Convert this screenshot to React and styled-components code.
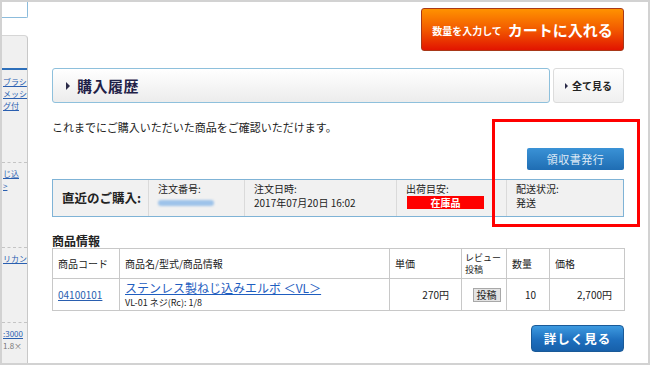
import React from 'react';
import styled, { createGlobalStyle } from 'styled-components';

const GlobalStyle = createGlobalStyle`
    html, body { margin: 0; padding: 0; background: #fff; }
    body { font-family: "Noto Sans CJK JP", "Liberation Sans", sans-serif; color: #333; }
`

const Frame = styled.div`
    width: 650px;
    height: 365px;
    box-sizing: border-box;
    border: 2px solid #d2d2d2;
    display: flex;
    overflow: hidden;
    position: relative;
    background: #fff;
`

const Sidebar = styled.div`
    width: 26px;
    flex-shrink: 0;
    display: flex;
    flex-direction: column;
`

const SideTop = styled.div`
    height: 22px;
    background: #fff;
    border-right: 1px solid #8cbcdc;
    border-bottom: 1px solid #8cbcdc;
    border-bottom-right-radius: 2px;
`

const SidePanel = styled.div`
    margin-top: 17px;
    flex: 1;
    background: #f0f0f0;
    border-top: 1px solid #d6d6d6;
    border-right: 1px solid #c8c8c8;
    border-top-right-radius: 4px;
    padding-top: 32px;
`

const SideBlue = styled.div`
    height: 2px;
    background: #2d6fba;
`

const SideItem = styled.div`
    height: ${p => p.h}px;
    box-sizing: border-box;
    padding: ${p => p.pt || 4}px 0 0 1px;
    border-bottom: ${p => p.last ? 'none' : '1px dashed #c4c4c4'};
    overflow: hidden;
`

const SideLink = styled.div`
    font-size: 8px;
    line-height: 12px;
    color: ${p => p.gray ? '#777' : '#2a5fb0'};
    text-decoration: ${p => p.gray ? 'none' : 'underline'};
    white-space: nowrap;
`

const Main = styled.div`
    flex: 1;
    min-width: 0;
    padding: 6px 24px 0 24px;
    display: flex;
    flex-direction: column;
`

const CartRow = styled.div`
    display: flex;
    justify-content: flex-end;
`

const CartButton = styled.div`
    width: 203px;
    height: 43px;
    box-sizing: border-box;
    border: 1px solid #a83818;
    border-radius: 3px;
    background: linear-gradient(#ff9200, #f25a00 50%, #e21400);
    display: flex;
    align-items: center;
    justify-content: center;
    gap: 6px;
    color: #fff;
    font-weight: bold;
`

const CartSmall = styled.span`
    font-size: 10px;
    margin-top: 2px;
`

const CartBig = styled.span`
    font-size: 15px;
`

const HeadRow = styled.div`
    display: flex;
    gap: 3px;
    margin-top: 17px;
    height: 35px;
`

const HeadBar = styled.div`
    flex: 1;
    box-sizing: border-box;
    border: 1px solid #8ec0dc;
    border-radius: 3px;
    background: linear-gradient(#fff, #ececec);
    display: flex;
    align-items: center;
    padding-left: 13px;
    gap: 7px;
`

const Arrow = styled.span`
    width: 0;
    height: 0;
    border-top: ${p => p.s}px solid transparent;
    border-bottom: ${p => p.s}px solid transparent;
    border-left: ${p => p.s * 1.2}px solid #2b2b48;
`

const HeadTitle = styled.span`
    font-size: 15px;
    font-weight: bold;
    color: #1f2147;
    letter-spacing: 0.5px;
`

const AllButton = styled.div`
    width: 71px;
    flex-shrink: 0;
    box-sizing: border-box;
    border: 1px solid #dcdcdc;
    border-radius: 3px;
    background: linear-gradient(#fff, #f0f0f0);
    display: flex;
    align-items: center;
    justify-content: center;
    gap: 4px;
    font-size: 10px;
    font-weight: bold;
    color: #222;
`

const Intro = styled.p`
    margin: 16px 0 0 0;
    font-size: 11px;
    line-height: 16px;
    color: #222;
`

const ReceiptRow = styled.div`
    display: flex;
    justify-content: flex-end;
    margin-top: 13px;
`

const ReceiptButton = styled.div`
    width: 97px;
    height: 22px;
    background: linear-gradient(#3a92d6, #1f6db3);
    border-radius: 2px;
    color: #dde9f6;
    font-size: 11px;
    display: flex;
    align-items: center;
    justify-content: center;
    letter-spacing: 0.5px;
`

const Recent = styled.div`
    margin-top: 9px;
    height: 38px;
    box-sizing: border-box;
    border: 1px solid #7fb3d6;
    background: #f1f1f1;
    display: flex;
`

const RecentCell = styled.div`
    width: ${p => p.w}px;
    flex-shrink: 0;
    box-sizing: border-box;
    border-left: ${p => p.first ? 'none' : '1px solid #dadada'};
    padding: ${p => p.first ? '0 0 0 9px' : '2px 0 0 9px'};
    display: flex;
    flex-direction: column;
    justify-content: ${p => p.first ? 'center' : 'flex-start'};
    font-size: 10px;
    line-height: 14px;
    color: #222;
`

const RecentLead = styled.span`
    font-size: 12.5px;
    font-weight: bold;
    color: #222;
`

const Blurred = styled.div`
    width: 56px;
    height: 6px;
    margin-top: 4px;
    background: #9ec3ea;
    border-radius: 3px;
    filter: blur(1px);
`

const StockBadge = styled.div`
    width: 77px;
    height: 13px;
    margin-left: 1px;
    background: #ff0000;
    color: #fff;
    font-weight: bold;
    font-size: 10px;
    line-height: 13px;
    text-align: center;
`

const SectionTitle = styled.div`
    margin-top: 16px;
    font-size: 12px;
    font-weight: bold;
    color: #222;
    line-height: 15px;
`

const Table = styled.table`
    border-collapse: collapse;
    width: 572px;
    font-size: 10px;
    color: #222;
    table-layout: fixed;
`

const Th = styled.td`
    width: ${p => p.w}px;
    box-sizing: border-box;
    height: 30px;
    border: 1px solid #c8c8c8;
    padding: 0 0 0 ${p => p.tight ? 3 : 5}px;
    font-size: ${p => p.tight ? 9 : 10}px;
    line-height: 12px;
    text-align: left;
    white-space: nowrap;
`

const Td = styled.td`
    height: 31px;
    border: 1px solid #c8c8c8;
    padding: 0 ${p => p.align === 'right' ? 12 : 0}px 0 ${p => p.align === 'right' ? 0 : 5}px;
    text-align: ${p => p.align || 'left'};
    vertical-align: middle;
    white-space: nowrap;
`

const CodeLink = styled.span`
    color: #2a5fb0;
    text-decoration: underline;
    font-size: 10px;
`

const NameLink = styled.div`
    color: #1f5ec0;
    text-decoration: underline;
    font-size: 12px;
    line-height: 16px;
`

const NameSub = styled.div`
    font-size: 9px;
    line-height: 13px;
`

const PostButton = styled.span`
    display: inline-block;
    padding: 0 3px;
    background: #e4e4e4;
    border: 1px solid #a8a8a8;
    font-size: 10px;
    line-height: 12px;
`

const MoreRow = styled.div`
    display: flex;
    justify-content: flex-end;
    margin-top: 14px;
`

const MoreButton = styled.div`
    width: 93px;
    height: 27px;
    box-sizing: border-box;
    border: 1px solid #1a5a98;
    border-radius: 4px;
    background: linear-gradient(#3d9ae0, #1e6fbe 55%, #1760aa);
    color: #fff;
    font-size: 12.5px;
    font-weight: bold;
    display: flex;
    align-items: center;
    justify-content: center;
    letter-spacing: 1px;
`

const Highlight = styled.div`
    position: absolute;
    left: 490px;
    top: 117px;
    width: 148px;
    height: 108px;
    box-sizing: border-box;
    border: 3px solid #ff0000;
    pointer-events: none;
`

const App = () => (
    <>
        <GlobalStyle />
        <Frame>
            <Sidebar>
                <SideTop />
                <SidePanel>
                    <SideBlue />
                    <SideItem h={93} pt={6}>
                        <SideLink>ブラシ</SideLink>
                        <SideLink>メッシ</SideLink>
                        <SideLink>グ付</SideLink>
                    </SideItem>
                    <SideItem h={85} pt={5}>
                        <SideLink>じ込</SideLink>
                        <SideLink>&gt;</SideLink>
                    </SideItem>
                    <SideItem h={75} pt={5}>
                        <SideLink>リカン</SideLink>
                    </SideItem>
                    <SideItem h={40} pt={5} last>
                        <SideLink>:3000</SideLink>
                        <SideLink gray>1.8×</SideLink>
                    </SideItem>
                </SidePanel>
            </Sidebar>
            <Main>
                <CartRow>
                    <CartButton>
                        <CartSmall>数量を入力して</CartSmall>
                        <CartBig>カートに入れる</CartBig>
                    </CartButton>
                </CartRow>
                <HeadRow>
                    <HeadBar>
                        <Arrow s={4} />
                        <HeadTitle>購入履歴</HeadTitle>
                    </HeadBar>
                    <AllButton>
                        <Arrow s={3} />
                        全て見る
                    </AllButton>
                </HeadRow>
                <Intro>これまでにご購入いただいた商品をご確認いただけます。</Intro>
                <ReceiptRow>
                    <ReceiptButton>領収書発行</ReceiptButton>
                </ReceiptRow>
                <Recent>
                    <RecentCell w={95} first>
                        <RecentLead>直近のご購入:</RecentLead>
                    </RecentCell>
                    <RecentCell w={96}>
                        <span>注文番号:</span>
                        <Blurred />
                    </RecentCell>
                    <RecentCell w={152}>
                        <span>注文日時:</span>
                        <span>2017年07月20日 16:02</span>
                    </RecentCell>
                    <RecentCell w={110}>
                        <span>出荷目安:</span>
                        <StockBadge>在庫品</StockBadge>
                    </RecentCell>
                    <RecentCell w={117}>
                        <span>配送状況:</span>
                        <span>発送</span>
                    </RecentCell>
                </Recent>
                <SectionTitle>商品情報</SectionTitle>
                <Table>
                    <tbody>
                        <tr>
                            <Th w={67}>商品コード</Th>
                            <Th w={270}>商品名/型式/商品情報</Th>
                            <Th w={72}>単価</Th>
                            <Th w={45} tight>レビュー<br />投稿</Th>
                            <Th w={43}>数量</Th>
                            <Th w={75}>価格</Th>
                        </tr>
                        <tr>
                            <Td><CodeLink>04100101</CodeLink></Td>
                            <Td>
                                <NameLink>ステンレス製ねじ込みエルボ ＜VL＞</NameLink>
                                <NameSub>VL-01 ネジ(Rc): 1/8</NameSub>
                            </Td>
                            <Td align="right">270円</Td>
                            <Td align="center"><PostButton>投稿</PostButton></Td>
                            <Td align="center">10</Td>
                            <Td align="right">2,700円</Td>
                        </tr>
                    </tbody>
                </Table>
                <MoreRow>
                    <MoreButton>詳しく見る</MoreButton>
                </MoreRow>
            </Main>
            <Highlight />
        </Frame>
    </>
);

export default App;
